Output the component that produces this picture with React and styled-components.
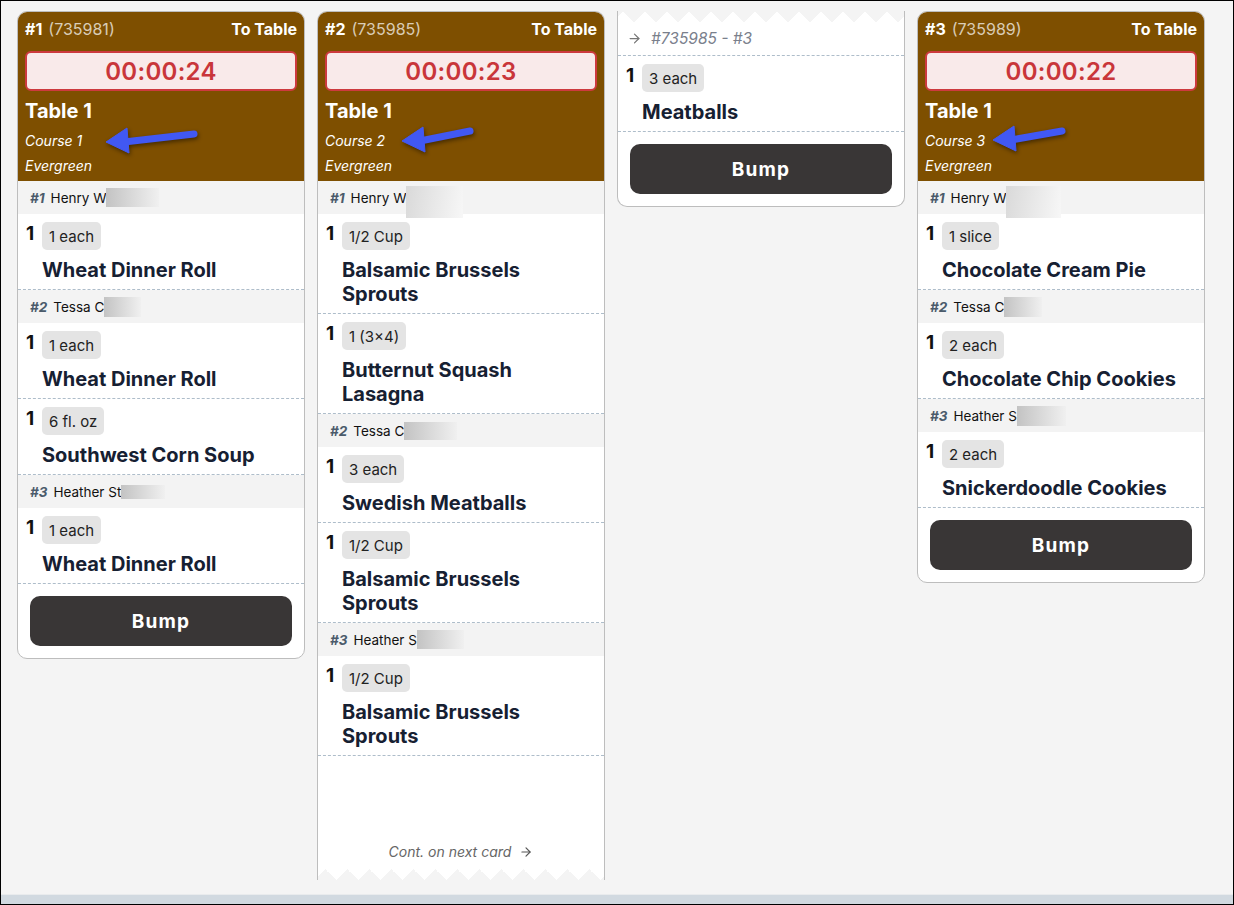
import React from "react";
import styled, { createGlobalStyle } from "styled-components";
import { ArrowRight } from "lucide-react";

const GlobalStyle = createGlobalStyle`
  *, *::before, *::after { box-sizing: border-box; }
  html, body { margin: 0; padding: 0; }
  body {
    font-family: Inter, "Noto Sans", sans-serif;
    background: #f4f4f4;
    color: #111;
  }
`;

const Frame = styled.div`
  width: 1234px;
  height: 905px;
  border: 1px solid #000;
  background: #f4f4f4;
  display: flex;
  flex-direction: column;
  overflow: hidden;
`;

const Board = styled.main`
  flex: 1;
  display: flex;
  align-items: flex-start;
  gap: 12px;
  padding: 10px 16px 0;
  overflow: hidden;
`;

const ScrollTrack = styled.div`
  height: 10px;
  flex: none;
  background: #d1d9e0;
  border-top: 1px solid #e9ebed;
`;

const Card = styled.section`
  width: 288px;
  flex: none;
  display: flex;
  flex-direction: column;
  background: #fff;
  border: 1px solid #bdbdbd;
  border-top-width: ${(p) => (p.$tornTop ? 0 : 1)}px;
  border-bottom-width: ${(p) => (p.$tornBottom ? 0 : 1)}px;
  border-radius: ${(p) =>
    p.$tornTop ? "0 0 10px 10px" : p.$tornBottom ? "10px 10px 0 0" : "10px"};
  height: ${(p) => (p.$height ? `${p.$height}px` : "auto")};
  overflow: hidden;
`;

/* zigzag tear where a ticket continues on another card */
const TornEdge = styled.div`
  height: 11px;
  flex: none;
  background: conic-gradient(
      from ${(p) => (p.$top ? "-45deg at 50% 100%" : "135deg at 50% 0")},
      #f4f4f4 90deg,
      transparent 0
    )
    ${(p) => (p.$top ? "5px" : "-4px")} 0 / 22px 11px repeat-x;
`;

const Header = styled.header`
  position: relative;
  background: #7e4f00;
  color: #fff;
  padding: 7px 7px 3px;
`;

const TopLine = styled.div`
  display: flex;
  align-items: center;
  justify-content: space-between;
  font-size: 16px;
  line-height: 20px;
`;

const OrderNo = styled.span`
  font-weight: 700;
`;

const Ticket = styled.span`
  margin-left: 6px;
  font-weight: 400;
  color: rgba(255, 255, 255, 0.72);
`;

const Dest = styled.span`
  font-weight: 700;
`;

const Timer = styled.div`
  margin-top: 12px;
  height: 40px;
  display: flex;
  align-items: center;
  justify-content: center;
  background: #f9eaea;
  border: 2px solid #cd3a3e;
  border-radius: 6px;
  color: #c9363a;
  font-size: 24px;
  font-weight: 600;
  letter-spacing: 0.3px;
`;

const TableName = styled.div`
  margin-top: 8px;
  font-size: 20px;
  line-height: 24px;
  font-weight: 700;
`;

const MetaList = styled.div`
  margin-top: 5px;
`;

const Meta = styled.div`
  font-size: 14px;
  line-height: 25px;
  font-style: italic;
`;

const Pointer = styled.svg`
  position: absolute;
  left: ${(p) => p.$x}px;
  top: ${(p) => p.$y}px;
  overflow: visible;
  filter: drop-shadow(1px 2px 2px rgba(0, 0, 0, 0.45));
`;

const GuestRow = styled.div`
  height: 33px;
  display: flex;
  align-items: center;
  gap: 6px;
  padding: 0 12px;
  background: #f3f3f3;
  font-size: 13.5px;
`;

const Seat = styled.span`
  font-style: italic;
  font-weight: 700;
  color: #4b5b6b;
`;

const GuestName = styled.span`
  display: inline-flex;
  align-items: center;
  color: #111;
`;

const Redacted = styled.span`
  display: inline-block;
  width: ${(p) => p.$w}px;
  height: ${(p) => p.$h}px;
  transform: translateY(${(p) => p.$dy || 0}px);
  background: ${(p) =>
    p.$light
      ? "linear-gradient(100deg, #d9d9d9, #f7f7f7)"
      : "linear-gradient(90deg, #c3c3c3, #f0f0f0)"};
`;

const ItemRow = styled.div`
  display: flex;
  gap: 7px;
  padding: 8px 22px 7px 8px;
  border-bottom: 1px dashed #aebdca;
`;

const Qty = styled.span`
  width: 9px;
  flex: none;
  font-size: 19px;
  line-height: 24px;
  font-weight: 700;
  color: #111;
`;

const ItemBody = styled.div`
  display: flex;
  flex-direction: column;
  align-items: flex-start;
  gap: 8px;
`;

const Unit = styled.span`
  height: 28px;
  display: inline-flex;
  align-items: center;
  padding: 0 7px;
  background: #e4e4e4;
  border-radius: 5px;
  font-size: 15px;
  color: #222;
`;

const ItemName = styled.div`
  font-size: 20px;
  line-height: 24px;
  font-weight: 700;
  color: #162032;
`;

const ContRow = styled.div`
  height: 34px;
  display: flex;
  align-items: center;
  gap: 9px;
  padding: 0 9px;
  border-bottom: 1px dashed #aebdca;
  font-size: 15.5px;
  font-style: italic;
  color: #7a808c;
`;

const ContNote = styled.div`
  margin-top: auto;
  margin-bottom: 8px;
  display: flex;
  align-items: center;
  justify-content: center;
  gap: 8px;
  font-size: 14px;
  line-height: 18px;
  font-style: italic;
  color: #666;
`;

const BumpArea = styled.div`
  padding: 12px;
`;

const BumpButton = styled.button`
  width: 100%;
  height: 50px;
  border: none;
  border-radius: 10px;
  background: #393636;
  color: #fff;
  font-family: inherit;
  font-size: 19px;
  font-weight: 700;
  letter-spacing: 1.2px;
  cursor: pointer;
`;

function CourseArrow({ x, y, len, rise }) {
  const w = len + 12;
  return (
    <Pointer $x={x} $y={y} width={w} height={40} viewBox={`0 0 ${w} 40`}>
      <path
        d={`M24 22 L${6 + len} ${22 - rise}`}
        stroke="#4158f3"
        strokeWidth="7"
        strokeLinecap="round"
      />
      <path d="M6 22 L27 8 L29 33 Z" fill="#4158f3" stroke="#4158f3" strokeWidth="1" strokeLinejoin="round" />
    </Pointer>
  );
}

const tickets = [
  {
    no: 1,
    ticket: "735981",
    timer: "00:00:24",
    course: "Course 1",
    arrow: { x: 82, y: 108, len: 88, rise: 8 },
    guests: [
      {
        seat: 1,
        name: "Henry W",
        patch: { w: 53, h: 19 },
        items: [{ unit: "1 each", name: "Wheat Dinner Roll" }],
      },
      {
        seat: 2,
        name: "Tessa C",
        patch: { w: 37, h: 20 },
        items: [
          { unit: "1 each", name: "Wheat Dinner Roll" },
          { unit: "6 fl. oz", name: "Southwest Corn Soup" },
        ],
      },
      {
        seat: 3,
        name: "Heather St",
        patch: { w: 44, h: 14 },
        items: [{ unit: "1 each", name: "Wheat Dinner Roll" }],
      },
    ],
    bump: true,
  },
  {
    no: 2,
    ticket: "735985",
    timer: "00:00:23",
    course: "Course 2",
    arrow: { x: 78, y: 107, len: 68, rise: 10 },
    guests: [
      {
        seat: 1,
        name: "Henry W",
        patch: { w: 57, h: 32, dy: 4, light: true },
        items: [
          { unit: "1/2 Cup", name: "Balsamic Brussels Sprouts" },
          { unit: "1 (3×4)", name: "Butternut Squash Lasagna" },
        ],
      },
      {
        seat: 2,
        name: "Tessa C",
        patch: { w: 53, h: 18 },
        items: [
          { unit: "3 each", name: "Swedish Meatballs" },
          { unit: "1/2 Cup", name: "Balsamic Brussels Sprouts" },
        ],
      },
      {
        seat: 3,
        name: "Heather S",
        patch: { w: 47, h: 19 },
        items: [{ unit: "1/2 Cup", name: "Balsamic Brussels Sprouts" }],
      },
    ],
    continued: true,
  },
  {
    continuation: "#735985 - #3",
    items: [{ unit: "3 each", name: "Meatballs" }],
    bump: true,
  },
  {
    no: 3,
    ticket: "735989",
    timer: "00:00:22",
    course: "Course 3",
    arrow: { x: 69, y: 106, len: 69, rise: 9 },
    guests: [
      {
        seat: 1,
        name: "Henry W",
        patch: { w: 55, h: 32, dy: 4, light: true },
        items: [{ unit: "1 slice", name: "Chocolate Cream Pie" }],
      },
      {
        seat: 2,
        name: "Tessa C",
        patch: { w: 38, h: 20 },
        items: [{ unit: "2 each", name: "Chocolate Chip Cookies" }],
      },
      {
        seat: 3,
        name: "Heather S",
        patch: { w: 49, h: 20 },
        items: [{ unit: "2 each", name: "Snickerdoodle Cookies" }],
      },
    ],
    bump: true,
  },
];

function Item({ unit, name }) {
  return (
    <ItemRow>
      <Qty>1</Qty>
      <ItemBody>
        <Unit>{unit}</Unit>
        <ItemName>{name}</ItemName>
      </ItemBody>
    </ItemRow>
  );
}

function Guest({ seat, name, patch, items }) {
  return (
    <>
      <GuestRow>
        <Seat>#{seat}</Seat>
        <GuestName>
          {name}
          <Redacted $w={patch.w} $h={patch.h} $dy={patch.dy} $light={patch.light} />
        </GuestName>
      </GuestRow>
      {items.map((it, i) => (
        <Item key={i} {...it} />
      ))}
    </>
  );
}

function TicketCard({ t }) {
  if (t.continuation) {
    return (
      <Card $tornTop>
        <TornEdge $top />
        <ContRow>
          <ArrowRight size={15} strokeWidth={2} color="#777" />
          <span>{t.continuation}</span>
        </ContRow>
        {t.items.map((it, i) => (
          <Item key={i} {...it} />
        ))}
        <BumpArea>
          <BumpButton>Bump</BumpButton>
        </BumpArea>
      </Card>
    );
  }

  return (
    <Card $tornBottom={t.continued} $height={t.continued ? 869 : null}>
      <Header>
        <TopLine>
          <span>
            <OrderNo>#{t.no}</OrderNo>
            <Ticket>({t.ticket})</Ticket>
          </span>
          <Dest>To Table</Dest>
        </TopLine>
        <Timer>{t.timer}</Timer>
        <TableName>Table 1</TableName>
        <MetaList>
          <Meta>{t.course}</Meta>
          <Meta>Evergreen</Meta>
        </MetaList>
        <CourseArrow {...t.arrow} />
      </Header>
      {t.guests.map((g) => (
        <Guest key={g.seat} {...g} />
      ))}
      {t.bump && (
        <BumpArea>
          <BumpButton>Bump</BumpButton>
        </BumpArea>
      )}
      {t.continued && (
        <>
          <ContNote>
            Cont. on next card
            <ArrowRight size={14} strokeWidth={2} color="#555" />
          </ContNote>
          <TornEdge />
        </>
      )}
    </Card>
  );
}

export default function App() {
  return (
    <>
      <GlobalStyle />
      <Frame>
        <Board>
          {tickets.map((t, i) => (
            <TicketCard key={i} t={t} />
          ))}
        </Board>
        <ScrollTrack />
      </Frame>
    </>
  );
}
